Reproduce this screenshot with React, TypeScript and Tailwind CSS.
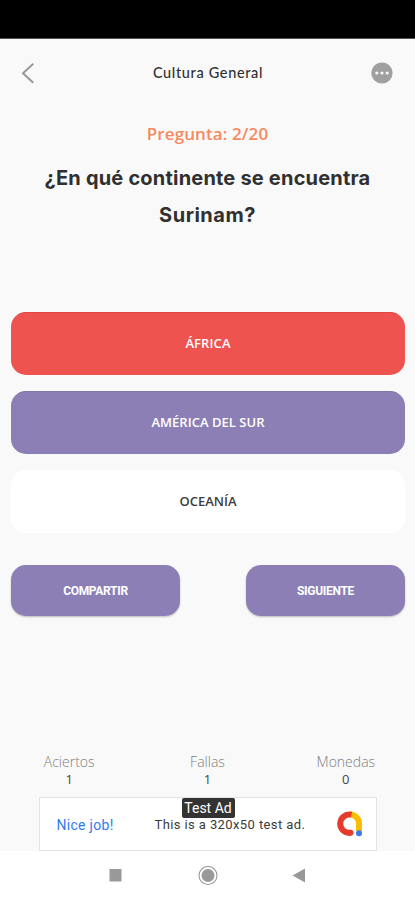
import { ReactNode } from 'react';

const options = [
    { label: 'ÁFRICA', style: 'bg-[#ee534f] border-t border-[#e04744] text-white tracking-[0.1px]' },
    { label: 'AMÉRICA DEL SUR', style: 'bg-[#8b7fb5] border-t border-[#8075a8] text-white tracking-[0.03px]' },
    { label: 'OCEANÍA', style: 'bg-white text-[#3c3c3c] tracking-[0px]' },
];

const stats = [
    { label: 'Aciertos', value: 1 },
    { label: 'Fallas', value: 1 },
    { label: 'Monedas', value: 0 },
];

const ActionButton = ({ className, children }: { className: string; children: ReactNode }) => (
    <button
        className={`h-[51px] rounded-[15px] bg-[#8b7fb5] font-['Roboto',sans-serif] text-[12px] font-bold tracking-[-0.3px] text-white shadow-[0_1px_2px_rgba(0,0,0,0.25)] ${className}`}
    >
        {children}
    </button>
);

const App = () => {
    return (
        <div className="flex h-[900px] w-[415px] flex-col overflow-hidden bg-[#f9f9f9] font-['Lato',sans-serif] text-[#303030]">
            {/* Status bar */}
            <div className="h-[39px] shrink-0 border-b border-[#555] bg-black" />

            {/* Header */}
            <header className="flex h-[67px] shrink-0 items-center justify-between pr-[22px] pl-[21px]">
                <div className="w-[24px]">
                    <svg className="h-[22px] w-[14px]" viewBox="0 0 14 22" fill="none" stroke="#999" strokeWidth={2}>
                        <path d="M12.3 1.8L2 11.3L12.3 20.8" />
                    </svg>
                </div>
                <h1 className="font-['Lato',sans-serif] text-[14.5px] font-medium tracking-[0.65px]">Cultura General</h1>
                <svg className="h-[22px] w-[22px]" viewBox="0 0 22 22">
                    <circle cx="11" cy="11" r="10.6" fill="#a0a0a0" />
                    <circle cx="5.8" cy="11" r="1.6" fill="#f9f9f9" />
                    <circle cx="11" cy="11" r="1.6" fill="#f9f9f9" />
                    <circle cx="16.2" cy="11" r="1.6" fill="#f9f9f9" />
                </svg>
            </header>

            {/* Question */}
            <div className="h-[206px] shrink-0 pt-[16px] text-center">
                <p className="font-['Open_Sans',sans-serif] text-[17px] leading-6 font-semibold tracking-[0.1px] text-[#f6895f]">Pregunta: 2/20</p>
                <h2 className="mt-[14px] font-['Inter',sans-serif] text-[20px] leading-[37px] font-bold tracking-[0.2px]">
                    ¿En qué continente se encuentra
                    <br />
                    <span className="tracking-[0.5px]">Surinam?</span>
                </h2>
            </div>

            {/* Answers */}
            <div className="flex shrink-0 flex-col gap-4 pr-[10px] pl-[11px]">
                {options.map((option) => (
                    <button
                        key={option.label}
                        className={`h-[63px] w-full rounded-[15px] font-['Open_Sans',sans-serif] text-[13px] font-semibold ${option.style}`}
                    >
                        {option.label}
                    </button>
                ))}
            </div>

            <div className="mt-8 flex shrink-0 justify-between pr-[10px] pl-[11px]">
                <ActionButton className="w-[169px]">COMPARTIR</ActionButton>
                <ActionButton className="w-[159px]">SIGUIENTE</ActionButton>
            </div>

            {/* Score */}
            <div className="mt-auto flex justify-around font-['Open_Sans',sans-serif]">
                {stats.map((stat) => (
                    <div key={stat.label} className="flex w-[138px] flex-col items-center">
                        <span className="text-[14px] leading-[18px] font-light text-[#808080]">{stat.label}</span>
                        <span className="text-[13px] leading-[16px] text-[#444]">{stat.value}</span>
                    </div>
                ))}
            </div>

            {/* Ad banner */}
            <div className="relative mx-auto mt-[10px] flex h-[54px] w-[338px] shrink-0 items-center border border-[#e2e2e2] bg-white pt-px font-['Roboto',sans-serif]">
                <span className="ml-[17px] w-[98px] pt-px text-[14px] tracking-[0.3px] text-[#2f7bed]">Nice job!</span>
                <span className="text-[13px] tracking-[0.4px] whitespace-nowrap text-[#3c3c3c]">This is a 320x50 test ad.</span>
                <svg className="absolute top-[12px] left-[296px] h-[28px] w-[28px]" viewBox="0 0 28 28" fill="none" strokeWidth={6}>
                    <path d="M14 4.5A9 9 0 0 1 23 13.5V21" stroke="#fbbc04" />
                    <path d="M15.5 4.7A9.2 9.2 0 1 0 14.5 22.8" stroke="#e53b2c" />
                    <circle cx="14.5" cy="22.8" r="3" fill="#e53b2c" />
                    <circle cx="23" cy="23.2" r="3" fill="#3b78e7" />
                </svg>
                <span className="absolute top-0 left-[142px] flex h-[20px] w-[53px] items-center justify-center rounded-[2px] bg-[#333] text-[14px] whitespace-nowrap text-white">
                    Test Ad
                </span>
            </div>

            {/* Navigation bar */}
            <nav className="flex h-[49px] shrink-0 items-center bg-white pl-[109px]">
                <svg className="h-[20px] w-[198px]" viewBox="0 0 198 20">
                    <rect x="0.5" y="3" width="12" height="12.5" fill="#999" />
                    <circle cx="99" cy="9.5" r="9" fill="none" stroke="#999" strokeWidth="1.1" />
                    <circle cx="99" cy="9.5" r="6.5" fill="#999" />
                    <path d="M183.5 9.5L196 2.5V16.5Z" fill="#999" />
                </svg>
            </nav>
        </div>
    );
};

export default App;
